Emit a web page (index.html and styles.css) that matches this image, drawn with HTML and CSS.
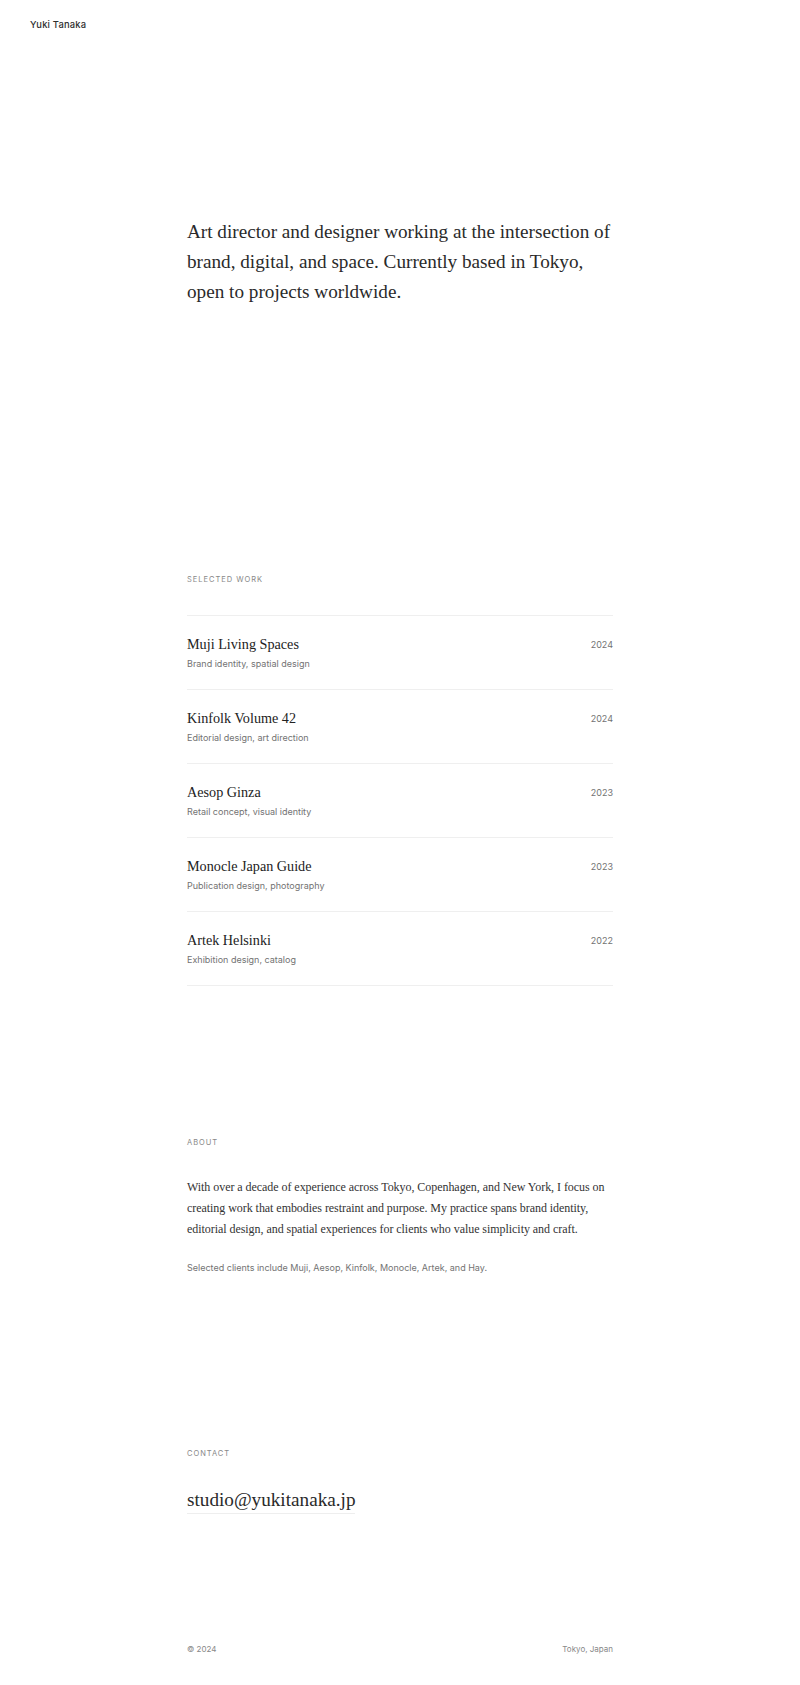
FILE: index.html
```html
<!DOCTYPE html>
<html lang="en">
<head>
<meta charset="utf-8">
<title>Yuki Tanaka</title>
<link rel="stylesheet" href="styles.css">
</head>
<body>
<header class="site-header">
  <span class="site-name">Yuki Tanaka</span>
</header>
<main class="container">
  <section class="hero">
    <p class="hero-text">Art director and designer working at the intersection of brand, digital, and space. Currently based in Tokyo, open to projects worldwide.</p>
  </section>

  <section class="work">
    <h2 class="label">Selected Work</h2>
    <ul class="work-list">
      <li class="work-item">
        <div class="work-info">
          <h3 class="work-title">Muji Living Spaces</h3>
          <p class="work-sub">Brand identity, spatial design</p>
        </div>
        <span class="work-year">2024</span>
      </li>
      <li class="work-item">
        <div class="work-info">
          <h3 class="work-title">Kinfolk Volume 42</h3>
          <p class="work-sub">Editorial design, art direction</p>
        </div>
        <span class="work-year">2024</span>
      </li>
      <li class="work-item">
        <div class="work-info">
          <h3 class="work-title">Aesop Ginza</h3>
          <p class="work-sub">Retail concept, visual identity</p>
        </div>
        <span class="work-year">2023</span>
      </li>
      <li class="work-item">
        <div class="work-info">
          <h3 class="work-title">Monocle Japan Guide</h3>
          <p class="work-sub">Publication design, photography</p>
        </div>
        <span class="work-year">2023</span>
      </li>
      <li class="work-item">
        <div class="work-info">
          <h3 class="work-title">Artek Helsinki</h3>
          <p class="work-sub">Exhibition design, catalog</p>
        </div>
        <span class="work-year">2022</span>
      </li>
    </ul>
  </section>

  <section class="about">
    <h2 class="label">About</h2>
    <p class="about-text">With over a decade of experience across Tokyo, Copenhagen, and New York, I focus on creating work that embodies restraint and purpose. My practice spans brand identity, editorial design, and spatial experiences for clients who value simplicity and craft.</p>
    <p class="clients">Selected clients include Muji, Aesop, Kinfolk, Monocle, Artek, and Hay.</p>
  </section>

  <section class="contact">
    <h2 class="label">Contact</h2>
    <a class="email" href="mailto:studio@yukitanaka.jp">studio@yukitanaka.jp</a>
  </section>

  <footer class="site-footer">
    <span>&copy; 2024</span>
    <span>Tokyo, Japan</span>
  </footer>
</main>
</body>
</html>
```

FILE: styles.css
```css
* {
  box-sizing: border-box;
}

html, body {
  margin: 0;
  padding: 0;
  background: #ffffff;
}

body {
  font-family: Inter, "Liberation Sans", sans-serif;
  color: #222222;
}

.site-header {
  padding: 17px 30px 0;
  height: 50px;
}

.site-name {
  display: block;
  font-size: 9.4px;
  font-weight: 500;
  line-height: 16px;
  color: #2e2e2e;
  letter-spacing: 0.02em;
}

.container {
  width: 426px;
  margin: 0 auto;
}

.hero {
  padding-top: 167px;
}

.hero-text {
  margin: 0;
  font-family: "Liberation Serif", serif;
  font-size: 19.2px;
  line-height: 30px;
  color: #2a2a2a;
}

.label {
  margin: 0;
  font-family: Inter, "Liberation Sans", sans-serif;
  font-weight: 400;
  font-size: 7.5px;
  line-height: 16px;
  letter-spacing: 0.13em;
  text-transform: uppercase;
  color: #888888;
}

.work {
  padding-top: 265px;
}

.work-list {
  list-style: none;
  margin: 27px 0 0;
  padding: 0;
  border-bottom: 1px solid #efefef;
}

.work-item {
  display: flex;
  justify-content: space-between;
  align-items: flex-start;
  border-top: 1px solid #efefef;
  padding: 18px 0 17px;
  height: 74px;
}

.work-title {
  margin: 0 0 1px;
  font-family: "Liberation Serif", serif;
  font-weight: 400;
  font-size: 14.2px;
  line-height: 20px;
  color: #222222;
}

.work-sub {
  margin: 0;
  font-size: 9px;
  line-height: 18px;
  color: #737373;
}

.work-year {
  font-size: 9px;
  line-height: 20px;
  padding-top: 1px;
  color: #737373;
}

.about {
  padding-top: 149px;
}

.about-text {
  margin: 26px 0 0;
  font-family: "Liberation Serif", serif;
  font-size: 12px;
  letter-spacing: -0.05px;
  line-height: 21px;
  color: #333333;
}

.clients {
  margin: 19px 0 0;
  font-size: 9px;
  line-height: 18px;
  color: #737373;
}

.contact {
  padding-top: 169px;
}

.email {
  display: inline-block;
  margin-top: 25px;
  font-family: "Liberation Serif", serif;
  font-size: 19.2px;
  line-height: 26px;
  color: #2a2a2a;
  text-decoration: none;
  border-bottom: 1px solid #eeeeee;
}

.site-footer {
  display: flex;
  justify-content: space-between;
  margin-top: 127px;
  padding-bottom: 27px;
  font-size: 8px;
  line-height: 16px;
  color: #888888;
}
```
